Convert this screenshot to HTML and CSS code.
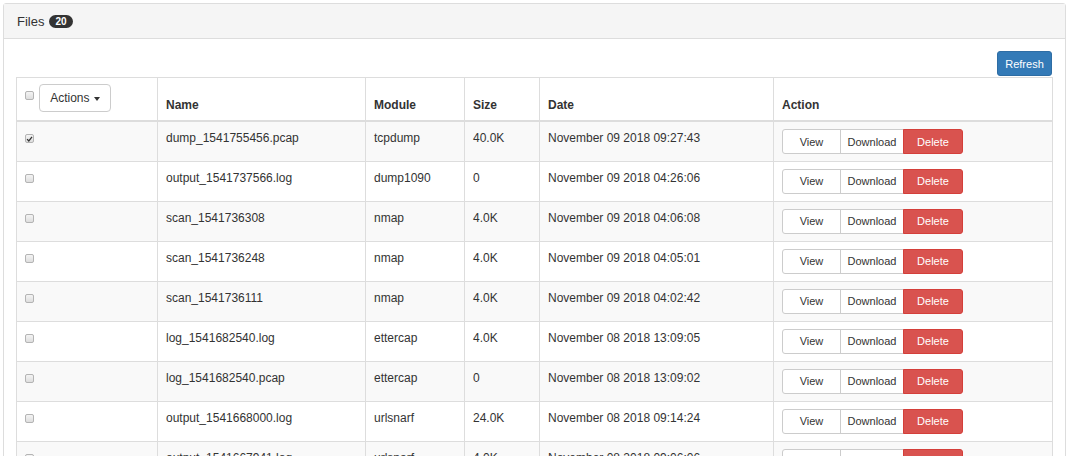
FILE: index.html
```html
<!DOCTYPE html>
<html>
<head>
<meta charset="utf-8">
<link rel="stylesheet" href="styles.css">
</head>
<body>
<div class="panel">
  <div class="panel-heading">Files <span class="badge">20</span></div>
  <div class="panel-body">
    <div class="toolbar"><button class="btn btn-primary">Refresh</button></div>
    <table class="files">
      <colgroup>
        <col class="c-check"><col class="c-name"><col class="c-module"><col class="c-size"><col class="c-date"><col class="c-action">
      </colgroup>
      <thead>
        <tr>
          <th class="th-first"><span class="cb cb-head"></span><button class="btn-actions">Actions <span class="caret"></span></button></th>
          <th>Name</th>
          <th>Module</th>
          <th>Size</th>
          <th>Date</th>
          <th>Action</th>
        </tr>
      </thead>
      <tbody>
        <tr>
          <td><span class="cb checked"><svg viewBox="0 0 10 10" width="8" height="8"><path d="M1.5 5.2 L4 7.8 L8.6 2" fill="none" stroke="#333" stroke-width="1.8"/></svg></span></td>
          <td>dump_1541755456.pcap</td><td>tcpdump</td><td>40.0K</td><td>November 09 2018 09:27:43</td>
          <td><div class="btn-group"><button class="gb">View</button><button class="gb dl">Download</button><button class="gb del">Delete</button></div></td>
        </tr>
        <tr>
          <td><span class="cb"></span></td>
          <td>output_1541737566.log</td><td>dump1090</td><td>0</td><td>November 09 2018 04:26:06</td>
          <td><div class="btn-group"><button class="gb">View</button><button class="gb dl">Download</button><button class="gb del">Delete</button></div></td>
        </tr>
        <tr>
          <td><span class="cb"></span></td>
          <td>scan_1541736308</td><td>nmap</td><td>4.0K</td><td>November 09 2018 04:06:08</td>
          <td><div class="btn-group"><button class="gb">View</button><button class="gb dl">Download</button><button class="gb del">Delete</button></div></td>
        </tr>
        <tr>
          <td><span class="cb"></span></td>
          <td>scan_1541736248</td><td>nmap</td><td>4.0K</td><td>November 09 2018 04:05:01</td>
          <td><div class="btn-group"><button class="gb">View</button><button class="gb dl">Download</button><button class="gb del">Delete</button></div></td>
        </tr>
        <tr>
          <td><span class="cb"></span></td>
          <td>scan_1541736111</td><td>nmap</td><td>4.0K</td><td>November 09 2018 04:02:42</td>
          <td><div class="btn-group"><button class="gb">View</button><button class="gb dl">Download</button><button class="gb del">Delete</button></div></td>
        </tr>
        <tr>
          <td><span class="cb"></span></td>
          <td>log_1541682540.log</td><td>ettercap</td><td>4.0K</td><td>November 08 2018 13:09:05</td>
          <td><div class="btn-group"><button class="gb">View</button><button class="gb dl">Download</button><button class="gb del">Delete</button></div></td>
        </tr>
        <tr>
          <td><span class="cb"></span></td>
          <td>log_1541682540.pcap</td><td>ettercap</td><td>0</td><td>November 08 2018 13:09:02</td>
          <td><div class="btn-group"><button class="gb">View</button><button class="gb dl">Download</button><button class="gb del">Delete</button></div></td>
        </tr>
        <tr>
          <td><span class="cb"></span></td>
          <td>output_1541668000.log</td><td>urlsnarf</td><td>24.0K</td><td>November 08 2018 09:14:24</td>
          <td><div class="btn-group"><button class="gb">View</button><button class="gb dl">Download</button><button class="gb del">Delete</button></div></td>
        </tr>
        <tr>
          <td><span class="cb"></span></td>
          <td>output_1541667941.log</td><td>urlsnarf</td><td>4.0K</td><td>November 08 2018 09:06:06</td>
          <td><div class="btn-group"><button class="gb">View</button><button class="gb dl">Download</button><button class="gb del">Delete</button></div></td>
        </tr>
      </tbody>
    </table>
  </div>
</div>
</body>
</html>
```

FILE: styles.css
```css
* { box-sizing: border-box; }
html, body { background: #fff; }
body {
  margin: 3px 0 0 3px;
  font-family: "Liberation Sans", Arial, sans-serif;
  font-size: 12px;
  line-height: 17px;
  color: #333;
  overflow: hidden;
}
.panel {
  width: 1063px;
  border: 1px solid #ddd;
  border-radius: 3px;
  background: #fff;
}
.panel-heading {
  background: #f5f5f5;
  border-bottom: 1px solid #ddd;
  height: 35px;
  padding: 0 13px;
  display: flex;
  align-items: center;
  font-size: 13px;
  color: #333;
}
.badge {
  display: inline-block;
  margin-left: 5px;
  background: #333;
  color: #fff;
  font-size: 10px;
  font-weight: bold;
  line-height: 11px;
  padding: 1px 6px;
  border-radius: 7px;
}
.panel-body {
  padding: 12px 12px 12px 12px;
}
.toolbar {
  display: flex;
  justify-content: flex-end;
  margin-bottom: 1px;
  padding-right: 1px;
}
.btn {
  font-family: inherit;
  cursor: pointer;
}
.btn-primary {
  width: 55px;
  height: 25px;
  background: #337ab7;
  border: 1px solid #2e6da4;
  border-radius: 3px;
  color: #fff;
  font-size: 11px;
  padding: 0;
}
table.files {
  width: 1036px;
  table-layout: fixed;
  border-collapse: collapse;
  border: 1px solid #ddd;
}
col.c-check { width: 141px; }
col.c-name { width: 208px; }
col.c-module { width: 99px; }
col.c-size { width: 75px; }
col.c-date { width: 234px; }
col.c-action { width: 279px; }
th, td {
  border: 1px solid #ddd;
  text-align: left;
  white-space: nowrap;
}
th {
  padding: 6px 8px 6px;
  vertical-align: bottom;
  font-weight: bold;
  border-bottom: 2px solid #ddd;
}
th.th-first {
  padding-bottom: 8px;
}
td {
  padding: 8px 8px 6px;
  vertical-align: top;
  height: 40px;
}
tbody tr:nth-child(odd) td { background: #f9f9f9; }
.cb {
  display: inline-flex;
  align-items: center;
  justify-content: center;
  width: 9px;
  height: 9px;
  border: 1px solid #b4b4b4;
  border-radius: 2px;
  background: linear-gradient(#f4f4f4, #dedede);
  vertical-align: top;
  margin-top: 4px;
}
.cb svg { display: block; }
.cb-head {
  margin-top: 0;
  vertical-align: top;
  position: relative;
  top: 7px;
  margin-right: 5px;
}
.btn-actions {
  font-family: inherit;
  font-size: 12px;
  color: #333;
  width: 72px;
  height: 28px;
  background: #fff;
  border: 1px solid #ccc;
  border-radius: 4px;
  padding: 0;
  vertical-align: top;
  line-height: 26px;
}
.caret {
  display: inline-block;
  width: 0;
  height: 0;
  border-top: 4px solid #333;
  border-left: 3.5px solid transparent;
  border-right: 3.5px solid transparent;
  vertical-align: middle;
  margin-left: 1px;
}
.btn-group {
  display: flex;
  margin-top: -1px;
}
.gb {
  font-family: inherit;
  font-size: 11px;
  height: 25px;
  padding: 0;
  border: 1px solid #ccc;
  background: #fff;
  color: #333;
  width: 59px;
}
.gb:first-child { border-radius: 3px 0 0 3px; }
.gb.dl { width: 64px; margin-left: -1px; }
.gb.del {
  width: 60px;
  margin-left: -1px;
  background: #d9534f;
  border-color: #d43f3a;
  color: #fff;
  border-radius: 0 3px 3px 0;
}
```
